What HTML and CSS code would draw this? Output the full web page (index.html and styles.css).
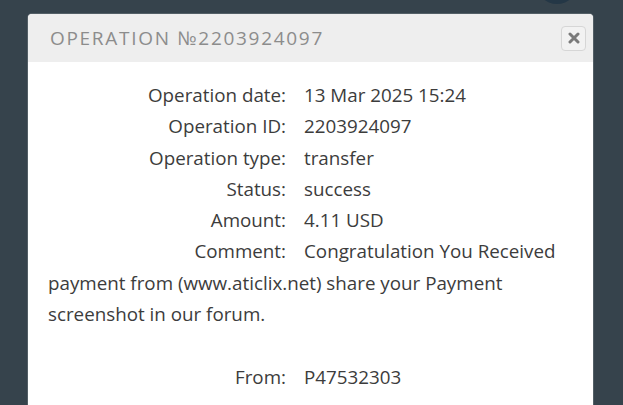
FILE: index.html
```html
<!DOCTYPE html>
<html>
<head>
<meta charset="utf-8">
<link rel="stylesheet" href="styles.css">
</head>
<body>
<div class="backdrop">
  <div class="bg-circle"></div>
  <div class="modal">
    <div class="modal-header">
      <h2 class="modal-title">OPERATION №2203924097</h2>
      <button class="close-btn" aria-label="Close">
        <svg width="12" height="12" viewBox="0 0 12 12"><path d="M2 2 L10 10 M10 2 L2 10" stroke="#7a7a7a" stroke-width="3" stroke-linecap="round"/></svg>
      </button>
    </div>
    <div class="modal-body">
      <div class="row"><span class="label">Operation date:</span><span class="value">13 Mar 2025 15:24</span></div>
      <div class="row"><span class="label">Operation ID:</span><span class="value">2203924097</span></div>
      <div class="row"><span class="label">Operation type:</span><span class="value">transfer</span></div>
      <div class="row"><span class="label">Status:</span><span class="value">success</span></div>
      <div class="row"><span class="label">Amount:</span><span class="value">4.11 USD</span></div>
      <div class="row"><span class="label">Comment:</span><span class="value">Congratulation You Received payment from (www.aticlix.net) share your Payment screenshot in our forum.</span></div>
      <div class="row empty">&nbsp;</div>
      <div class="row"><span class="label">From:</span><span class="value">P47532303</span></div>
    </div>
  </div>
</div>
</body>
</html>
```
FILE: styles.css
```css
* { box-sizing: border-box; }
html, body { margin: 0; padding: 0; }
body {
  width: 623px;
  height: 405px;
  overflow: hidden;
  background: #36434c;
  font-family: "Open Sans", sans-serif;
}
.backdrop {
  position: relative;
  padding: 14px 30px 0 28px;
  height: 405px;
}
.bg-circle {
  position: absolute;
  left: 536px;
  top: -38px;
  width: 42px;
  height: 42px;
  border-radius: 50%;
  background: #243746;
}
.modal {
  position: relative;
  width: 565px;
  background: #fff;
  border-radius: 4px 4px 0 0;
  box-shadow: 0 0 0 1px rgba(255,255,255,0.15);
  height: 400px;
}
.modal-header {
  display: flex;
  align-items: center;
  justify-content: space-between;
  height: 48px;
  background: #eeeeee;
  border-radius: 4px 4px 0 0;
  padding: 0 7px 0 22px;
}
.modal-title {
  margin: 0;
  font-weight: 400;
  font-size: 19px;
  letter-spacing: 1.7px;
  color: #8c8c8c;
}
.close-btn {
  width: 25px;
  height: 25px;
  padding: 0;
  border: 1px solid #d6d6d6;
  border-radius: 4px;
  background: #f2f2f2;
  display: flex;
  align-items: center;
  justify-content: center;
}
.modal-body {
  padding: 18px 20px 0 20px;
  color: #3c3c3c;
  font-size: 18.8px;
  line-height: 31.3px;
}
.row { margin: 0; }
.label {
  display: inline-block;
  width: 238px;
  text-align: right;
  margin-right: 18px;
}
```
